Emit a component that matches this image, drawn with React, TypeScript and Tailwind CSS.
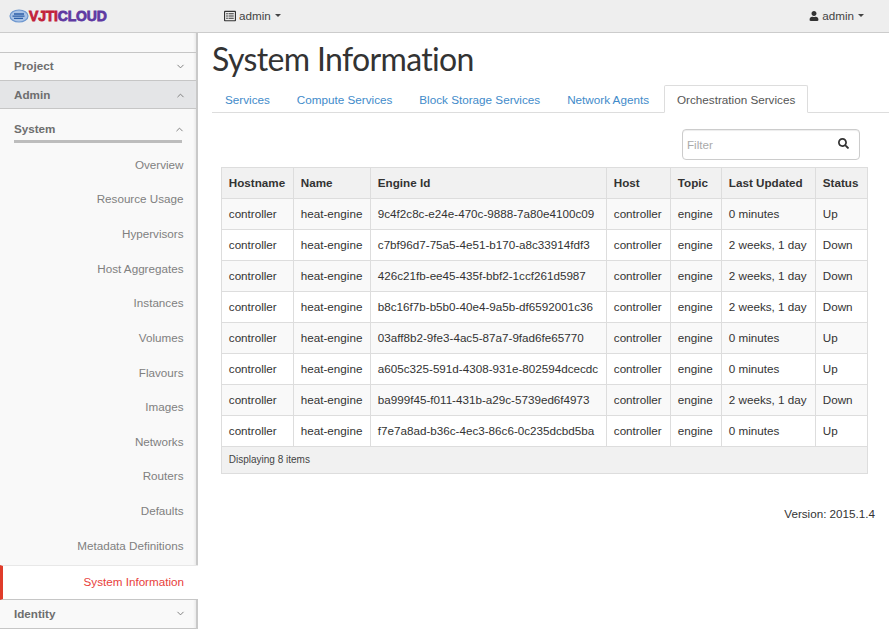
import { ChevronDown, ChevronUp } from 'lucide-react'
import { FaUser, FaSearch, FaRegListAlt } from 'react-icons/fa'

const NAV_ITEMS = ['Overview', 'Resource Usage', 'Hypervisors', 'Host Aggregates', 'Instances', 'Volumes', 'Flavours', 'Images', 'Networks', 'Routers', 'Defaults', 'Metadata Definitions']

const TABS = ['Services', 'Compute Services', 'Block Storage Services', 'Network Agents']

const ROWS = [
  ['9c4f2c8c-e24e-470c-9888-7a80e4100c09', '0 minutes', 'Up'],
  ['c7bf96d7-75a5-4e51-b170-a8c33914fdf3', '2 weeks, 1 day', 'Down'],
  ['426c21fb-ee45-435f-bbf2-1ccf261d5987', '2 weeks, 1 day', 'Down'],
  ['b8c16f7b-b5b0-40e4-9a5b-df6592001c36', '2 weeks, 1 day', 'Down'],
  ['03aff8b2-9fe3-4ac5-87a7-9fad6fe65770', '0 minutes', 'Up'],
  ['a605c325-591d-4308-931e-802594dcecdc', '0 minutes', 'Up'],
  ['ba999f45-f011-431b-a29c-5739ed6f4973', '2 weeks, 1 day', 'Down'],
  ['f7e7a8ad-b36c-4ec3-86c6-0c235dcbd5ba', '0 minutes', 'Up'],
]

const COLUMNS = [
  { label: 'Hostname', width: 'w-[72px]' },
  { label: 'Name', width: 'w-[77px]' },
  { label: 'Engine Id', width: 'w-[236px]' },
  { label: 'Host', width: 'w-[64px]' },
  { label: 'Topic', width: 'w-[51px]' },
  { label: 'Last Updated', width: 'w-[94px]' },
  { label: 'Status', width: 'w-[52px]' },
]

function Logo() {
  return (
    <div className="flex items-center">
      <svg width="20" height="14" viewBox="0 0 20 14">
        <ellipse cx="10" cy="7" rx="9" ry="6" fill="#a9c3e6" stroke="#6d97cf" strokeWidth="1.2" />
        <path d="M5 5h10M3.5 7.2h12M5 9.4h9" stroke="#2c5fa8" strokeWidth="1.3" />
      </svg>
      <span className="text-[14px] leading-none font-bold tracking-[-0.2px]" style={{ WebkitTextStroke: '0.8px' }}>
        <span className="text-[#c2213b]">VJTI</span>
        <span className="text-[#5f3aa2]">CLOUD</span>
      </span>
    </div>
  )
}

function AccordionHeader({ label, open, active }: { label: string; open?: boolean; active?: boolean }) {
  return (
    <div className={`flex shrink-0 items-center justify-between border-b border-[#c6c6c6] pr-[10px] pl-[14px] ${label === 'Identity' ? 'h-[29px]' : 'h-[28px]'} ${label === 'Project' ? 'pb-[1px]' : ''} ${active ? 'bg-[#e4e5e7] pt-[1px]' : ''}`}>
      <span className="text-[11.66px] font-bold text-[#6e6e6e]">{label}</span>
      {open ? <ChevronUp size={11} className="text-[#777]" /> : <ChevronDown size={11} className="text-[#777]" />}
    </div>
  )
}

function Sidebar() {
  return (
    <aside className="flex w-[198px] shrink-0 flex-col border-r-2 border-[#c9c9c9] bg-[#f9f9f9] shadow-[inset_-3px_0_3px_-2px_rgba(0,0,0,0.08)]">
      <div className="h-[20px] shrink-0 border-b border-[#c6c6c6]" />
      <AccordionHeader label="Project" />
      <AccordionHeader label="Admin" open active />
      <div className="mx-[14px] flex h-[34px] shrink-0 items-center justify-between border-b-[3px] border-[#bdbdbd] pt-[9px]">
        <span className="text-[11.66px] font-bold text-[#6e6e6e]">System</span>
        <ChevronUp size={11} className="mr-[-3px] text-[#777]" />
      </div>
      <div className="flex flex-col pt-[4px]">
        {NAV_ITEMS.map(item => (
          <div key={item} className="flex h-[34.67px] items-center justify-end pr-[12.5px] text-[11.66px] text-[#808080]">
            {item}
          </div>
        ))}
      </div>
      <div className="relative z-10 mt-[2px] mr-[-2px] flex h-[35px] shrink-0 items-center justify-end border-y border-t-[#e8e8e8] border-b-[#c6c6c6] border-l-[3px] border-l-[#e03c2a] bg-white pr-[14px] pb-[1px] text-[11.66px] text-[#e8403a]">
        System Information
      </div>
      <AccordionHeader label="Identity" />
    </aside>
  )
}

export default function App() {
  return (
    <div className="flex h-[629px] w-[889px] flex-col overflow-hidden bg-white font-['Liberation_Sans',sans-serif] text-[#333]">
      <header className="flex h-[33px] shrink-0 items-center border-b border-[#cccccc] bg-[#eeeeee] text-[11.66px] text-[#444]">
        <div className="flex w-[224px] pl-[9px]">
          <Logo />
        </div>
        <div className="flex items-center gap-[3px]">
          <FaRegListAlt size={12} className="text-[#333]" />
          <span>admin</span>
          <span className="ml-[1px] h-0 w-0 border-x-[3px] border-t-[3px] border-x-transparent border-t-[#444]" />
        </div>
        <div className="ml-auto flex items-center gap-[3px] pr-[25px]">
          <FaUser size={10} className="text-[#333]" />
          <span>admin</span>
          <span className="ml-[1px] h-0 w-0 border-x-[3px] border-t-[3px] border-x-transparent border-t-[#444]" />
        </div>
      </header>

      <div className="flex min-h-0 flex-1">
        <Sidebar />

        <main className="min-w-0 flex-1 pr-[21px] pl-[14px]">
          <h1 className="mt-[7px] font-['Lato',sans-serif] text-[32px] leading-[38px] tracking-[-0.64px] text-[#333]">System Information</h1>

          <div className="mt-[8px] flex h-[27px] w-[677px] items-end border-b border-[#dddddd] text-[11.7px] leading-[15px]">
            <div className="ml-[-0.5px] flex items-end">
              {TABS.map(tab => (
                <span key={tab} className="px-[13.5px] pb-[5px] text-[#428bca]">{tab}</span>
              ))}
              <span className="mb-[-1px] ml-[1.5px] rounded-t-[2px] border border-[#dddddd] border-b-white bg-white px-[12px] pt-[6px] pb-[5px] text-[#555]">
                Orchestration Services
              </span>
            </div>
          </div>

          <div className="mt-[16px] ml-[470px] flex h-[31px] w-[178px] items-center justify-between rounded-[4px] border border-[#cccccc] pr-[10px] pl-[4px] shadow-[inset_0_1px_1px_rgba(0,0,0,0.075)]">
            <span className="mt-[1px] text-[11.66px] text-[#aaaaaa]">Filter</span>
            <FaSearch size={11} className="mt-[-3px] text-[#333]" />
          </div>

          <table className="mt-[7px] ml-[9px] w-[646px] table-fixed border-collapse text-[11.66px]">
            <thead>
              <tr className="h-[31px] bg-[#f1f1f1]">
                {COLUMNS.map(col => (
                  <th key={col.label} className={`${col.width} border border-[#dddddd] px-[6.8px] text-left font-bold whitespace-nowrap`}>{col.label}</th>
                ))}
              </tr>
            </thead>
            <tbody>
              {ROWS.map(([id, updated, status], i) => (
                <tr key={id} className={`h-[31px] ${i % 2 === 0 ? 'bg-[#f9f9f9]' : 'bg-white'}`}>
                  {['controller', 'heat-engine', id, 'controller', 'engine', updated, status].map((cell, j) => (
                    <td key={j} className="border border-[#dddddd] px-[6.8px] whitespace-nowrap">{cell}</td>
                  ))}
                </tr>
              ))}
            </tbody>
            <tfoot>
              <tr className="h-[27px] bg-[#f1f1f1]">
                <td colSpan={7} className="border border-[#dddddd] px-[6.8px] pb-[2px] text-[10px] text-[#444]">Displaying 8 items</td>
              </tr>
            </tfoot>
          </table>

          <div className="mt-[31px] w-[663px] text-right text-[11.66px]">Version: 2015.1.4</div>
        </main>
      </div>
    </div>
  )
}
